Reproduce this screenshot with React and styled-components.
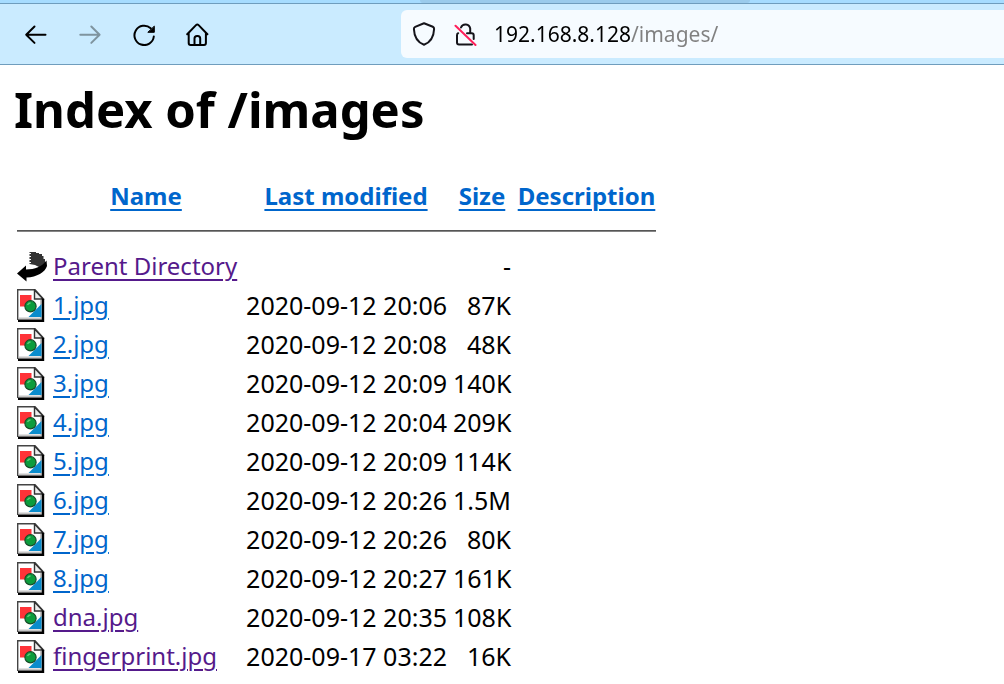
import React from 'react';
import styled, { createGlobalStyle } from 'styled-components';

const GlobalStyle = createGlobalStyle`
  * { box-sizing: border-box; }
  body {
    margin: 0;
    overflow-x: hidden;
    background: #fff;
    color: #000;
    font-family: "Noto Sans", "Open Sans", sans-serif;
  }
`;

const TabStrip = styled.div`
  height: 3px;
  padding: 0 254px 0 420px;
  background: #a6dcff;
`;

const TabShadow = styled.div`
  height: 3px;
  background: #9acbec;
  border-radius: 0 0 4px 4px;
`;

const Toolbar = styled.header`
  display: flex;
  align-items: center;
  height: 62px;
  padding-left: 18px;
  background: #caebff;
  border-top: 1px solid #6f9dbd;
  border-bottom: 1px solid #6f9dbd;
`;

const NavButtons = styled.nav`
  display: flex;
  flex: none;
  gap: 18px;
  width: 383px;
`;

const NavButton = styled.button`
  display: flex;
  align-items: center;
  justify-content: center;
  width: 36px;
  height: 36px;
  padding: 0;
  border: 0;
  background: none;
  color: ${({ disabled }) => (disabled ? '#7f949f' : '#000')};
`;

const Icon = styled.svg`
  display: block;
  flex: none;
  width: 24px;
  height: 24px;
  fill: none;
  stroke: currentColor;
  stroke-width: 2;
  stroke-linecap: round;
  stroke-linejoin: round;
`;

const AddressBar = styled.form`
  display: flex;
  flex: 1;
  align-items: center;
  height: 48px;
  padding-left: 11px;
  background: #f6fbff;
  border-radius: 6px 0 0 6px;
  color: #15141a;
`;

const AddressIcons = styled.span`
  display: flex;
  gap: 18px;
  padding-right: 16px;
`;

const AddressInput = styled.input`
  flex: 1;
  min-width: 0;
  height: 32px;
  padding: 0;
  border: 0;
  outline: 0;
  font-family: inherit;
  font-size: 21px;
  line-height: 32px;
  color: transparent;
  background: linear-gradient(90deg, #000 137px, #808080 137px);
  background-clip: text;
  -webkit-background-clip: text;
`;

const Page = styled.main`
  padding: 0 14px;
`;

const Title = styled.h1`
  margin: 0;
  padding: 11px 0 36px;
  font-size: 49px;
  line-height: 66px;
  font-weight: 700;
`;

const Listing = styled.table`
  table-layout: fixed;
  width: 645px;
  border-collapse: collapse;
  font-size: 25px;
  line-height: 34px;
`;

const Column = styled.col`
  width: ${({ $width }) => $width}px;
`;

const HeaderCell = styled.th`
  height: 34px;
  padding: 0 3px;
  white-space: nowrap;
`;

const RuleCell = styled.td`
  padding: 17px 3px 14px;
`;

const Rule = styled.hr`
  height: 2px;
  margin: 0;
  border: 0;
  border-top: 1px solid #555;
  border-bottom: 1px solid #858585;
`;

const Cell = styled.td`
  height: 39px;
  padding: 0 3px;
  text-align: ${({ $align }) => $align || 'left'};
  white-space: nowrap;
`;

const Link = styled.a`
  font-size: 24px;
  color: ${({ $visited }) => ($visited ? '#551a8b' : '#0066cc')};
  text-decoration-thickness: 2px;
  text-underline-offset: 4px;
`;

const FileIcon = styled.svg`
  display: block;
  width: 30px;
  height: 33px;
  margin-top: 2px;
`;

const BackIcon = () => (
  <Icon viewBox="0 0 24 24" aria-hidden="true">
    <path d="M21.500 12.700H2.200M10.500 4.500L2.200 12.700L10.500 20.900" />
  </Icon>
);

const ForwardIcon = () => (
  <Icon viewBox="0 0 24 24" aria-hidden="true">
    <path d="M2.300 12.700H21.600M13.300 4.500L21.600 12.700L13.300 20.900" />
  </Icon>
);

const ReloadIcon = () => (
  <Icon viewBox="0 0 24 24" aria-hidden="true">
    <path d="M18.700 6.200A9.700 9.700 0 1 0 21.800 14.500" />
    <path d="M22.300 4.500V10.300H16.200Z" fill="currentColor" strokeWidth="1" />
  </Icon>
);

const HomeIcon = () => (
  <Icon viewBox="0 0 24 24" aria-hidden="true">
    <path d="M1.200 12.200L10 3.100Q11.300 1.800 12.600 3.100L21.400 12.200M2.700 11V21Q2.700 22.900 4.600 22.900H18Q19.900 22.900 19.900 21V11" />
    <path d="M8.500 22.500V16.500Q8.500 14 11 14H11.700Q14.200 14 14.200 16.500V22.500" />
  </Icon>
);

const ShieldIcon = () => (
  <Icon viewBox="0 0 24 24" aria-hidden="true">
    <path d="M12 1.2L20.800 4.800Q22.200 5.400 22.100 7C21.800 14.500 18 20.500 12 22.800C6 20.500 2.200 14.500 1.900 7Q1.800 5.400 3.200 4.800Z" />
  </Icon>
);

const InsecureIcon = () => (
  <Icon viewBox="0 0 24 24" aria-hidden="true">
    <path d="M7 5.500A4.800 4.800 0 0 1 16.200 6.500V11M13 11.200H17.700Q19.700 11.200 19.700 13.200V17M4.200 11.200Q3 11.700 3 13.200V20.500Q3 22.500 5 22.500H18" />
    <path d="M1.500 3.800L21.500 23" stroke="#ff1f5a" />
  </Icon>
);

const ParentIcon = () => (
  <FileIcon viewBox="0 0 30 33" role="img" aria-label="[PARENTDIR]">
    <path d="M12.500 2H19V3H22V4H25V6H26.500V9H28V13L24 18L18 15L12.500 14Z" fill="#333" />
    <path d="M12 3.500H14M12 6.500H14M12 9.500H14M12 12.500H14" stroke="#fff" strokeWidth="1" />
    <path d="M0 23.500L9 15.500V19.500C18 19.500 25 16.500 29.500 10.500L30 16C28 22.500 20 27 9.500 27.500V31.500Z" fill="#000" />
  </FileIcon>
);

const ImageIcon = () => (
  <FileIcon viewBox="0 0 30 33" role="img" aria-label="[IMG]">
    <path d="M1 1H18L26 10V31.500H1Z" fill="#fff" />
    <path d="M24 11V29.500H2" fill="none" stroke="#c5c5c5" strokeWidth="2" />
    <path d="M.7 31V.7H18L26 9.500" fill="none" stroke="#444" strokeWidth="1.400" />
    <path d="M17.500 1V10H26Z" fill="#eee" stroke="#333" strokeWidth="1.400" />
    <path d="M26 9.500V31.800H1" fill="none" stroke="#000" strokeWidth="2.400" />
    <path d="M3 6H14.500V17.500H3Z" fill="#ff3338" />
    <path d="M24.500 15V28H11.500Z" fill="#0a8ccc" />
    <circle cx="13.500" cy="17.300" r="5.600" fill="#0c9c3c" stroke="#174d29" strokeWidth="1.200" />
    <path d="M10.500 16Q11.500 14 13.500 14" fill="none" stroke="#58c878" strokeWidth="1.500" />
  </FileIcon>
);

const files = [
  { name: '1.jpg', modified: '2020-09-12 20:06', size: '87K' },
  { name: '2.jpg', modified: '2020-09-12 20:08', size: '48K' },
  { name: '3.jpg', modified: '2020-09-12 20:09', size: '140K' },
  { name: '4.jpg', modified: '2020-09-12 20:04', size: '209K' },
  { name: '5.jpg', modified: '2020-09-12 20:09', size: '114K' },
  { name: '6.jpg', modified: '2020-09-12 20:26', size: '1.5M' },
  { name: '7.jpg', modified: '2020-09-12 20:26', size: '80K' },
  { name: '8.jpg', modified: '2020-09-12 20:27', size: '161K' },
  { name: 'dna.jpg', modified: '2020-09-12 20:35', size: '108K', visited: true },
  { name: 'fingerprint.jpg', modified: '2020-09-17 03:22', size: '16K', visited: true },
];

const headings = ['Name', 'Last modified', 'Size', 'Description'];
const columnWidths = [36, 192, 208, 64, 145];

export default function App() {
  return (
    <>
      <GlobalStyle />
      <TabStrip><TabShadow /></TabStrip>
      <Toolbar>
        <NavButtons aria-label="Browser">
          <NavButton aria-label="Back"><BackIcon /></NavButton>
          <NavButton aria-label="Forward" disabled><ForwardIcon /></NavButton>
          <NavButton aria-label="Reload"><ReloadIcon /></NavButton>
          <NavButton aria-label="Home"><HomeIcon /></NavButton>
        </NavButtons>
        <AddressBar onSubmit={(event) => event.preventDefault()}>
          <AddressIcons>
            <ShieldIcon />
            <InsecureIcon />
          </AddressIcons>
          <AddressInput aria-label="Address" defaultValue="192.168.8.128/images/" spellCheck={false} />
        </AddressBar>
      </Toolbar>
      <Page>
        <Title>Index of /images</Title>
        <Listing>
          <colgroup>
            {columnWidths.map((width) => <Column key={width} $width={width} />)}
          </colgroup>
          <thead>
            <tr>
              <HeaderCell as="td" />
              {headings.map((heading) => (
                <HeaderCell key={heading} scope="col"><Link href="#">{heading}</Link></HeaderCell>
              ))}
            </tr>
          </thead>
          <tbody>
            <tr><RuleCell colSpan={5}><Rule /></RuleCell></tr>
            <tr>
              <Cell><ParentIcon /></Cell>
              <Cell><Link href="#" $visited>Parent Directory</Link></Cell>
              <Cell />
              <Cell $align="right">-</Cell>
              <Cell />
            </tr>
            {files.map((file) => (
              <tr key={file.name}>
                <Cell><ImageIcon /></Cell>
                <Cell><Link href="#" $visited={file.visited}>{file.name}</Link></Cell>
                <Cell $align="right">{file.modified}</Cell>
                <Cell $align="right">{file.size}</Cell>
                <Cell />
              </tr>
            ))}
          </tbody>
        </Listing>
      </Page>
    </>
  );
}
